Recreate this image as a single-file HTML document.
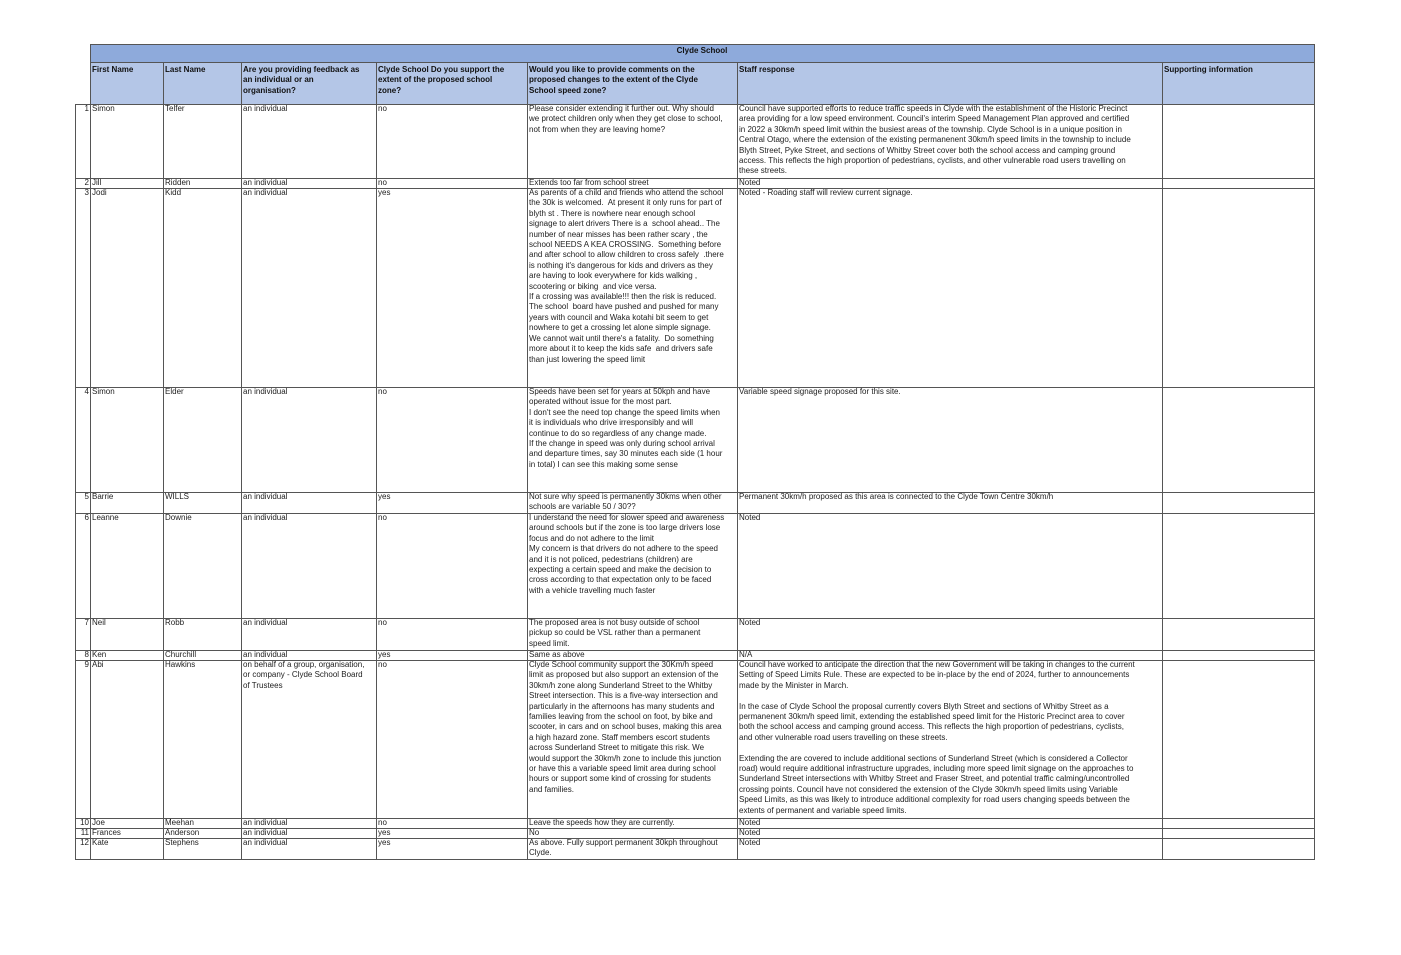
<!DOCTYPE html>
<html><head><meta charset="utf-8"><style>
body{margin:0;width:1401px;height:955px;background:#fff;position:relative;overflow:hidden;font-family:"Liberation Sans",Arial,sans-serif;font-size:8px;color:#222}
.h{position:absolute;height:1px;background:#555}
.v{position:absolute;width:1px;background:#555}
.t{position:absolute;line-height:10.4px;white-space:nowrap}
.b{font-weight:bold;color:#111}
.n{position:absolute;left:75px;width:14px;text-align:right;line-height:10.4px}
</style></head><body>
<div style="position:absolute;left:90px;top:44px;width:1224px;height:18px;background:#8eaadb"></div>
<div style="position:absolute;left:90px;top:62px;width:1224px;height:42px;background:#b4c6e7"></div>
<div class="t b" style="left:90px;width:1224px;text-align:center;top:46px">Clyde School</div>
<div class="h" style="left:90px;width:1225px;top:44px"></div>
<div class="h" style="left:90px;width:1225px;top:62px"></div>
<div class="h" style="left:75px;width:1240px;top:104px"></div>
<div class="h" style="left:75px;width:1240px;top:178px"></div>
<div class="h" style="left:75px;width:1240px;top:188px"></div>
<div class="h" style="left:75px;width:1240px;top:387px"></div>
<div class="h" style="left:75px;width:1240px;top:492px"></div>
<div class="h" style="left:75px;width:1240px;top:513px"></div>
<div class="h" style="left:75px;width:1240px;top:618px"></div>
<div class="h" style="left:75px;width:1240px;top:650px"></div>
<div class="h" style="left:75px;width:1240px;top:660px"></div>
<div class="h" style="left:75px;width:1240px;top:818px"></div>
<div class="h" style="left:75px;width:1240px;top:828px"></div>
<div class="h" style="left:75px;width:1240px;top:838px"></div>
<div class="h" style="left:75px;width:1240px;top:859px"></div>
<div class="v" style="left:75px;top:104px;height:756px"></div>
<div class="v" style="left:90px;top:44px;height:816px"></div>
<div class="v" style="left:163px;top:62px;height:798px"></div>
<div class="v" style="left:241px;top:62px;height:798px"></div>
<div class="v" style="left:376px;top:62px;height:798px"></div>
<div class="v" style="left:527px;top:62px;height:798px"></div>
<div class="v" style="left:737px;top:62px;height:798px"></div>
<div class="v" style="left:1162px;top:62px;height:798px"></div>
<div class="v" style="left:1314px;top:44px;height:816px"></div>

<div class="t b" style="left:92px;top:65px">First Name</div>
<div class="t b" style="left:165px;top:65px">Last Name</div>
<div class="t b" style="left:243px;top:65px">Are you providing feedback as<br>an individual or an<br>organisation?</div>
<div class="t b" style="left:378px;top:65px">Clyde School Do you support the<br>extent of the proposed school<br>zone?</div>
<div class="t b" style="left:529px;top:65px">Would you like to provide comments on the<br>proposed changes to the extent of the Clyde<br>School speed zone?</div>
<div class="t b" style="left:739px;top:65px">Staff response</div>
<div class="t b" style="left:1164px;top:65px">Supporting information</div>

<!-- row 1 -->
<div class="n" style="top:104px">1</div>
<div class="t" style="left:92px;top:104px">Simon</div>
<div class="t" style="left:165px;top:104px">Telfer</div>
<div class="t" style="left:243px;top:104px">an individual</div>
<div class="t" style="left:378px;top:104px">no</div>
<div class="t" style="left:529px;top:104px">Please consider extending it further out. Why should<br>we protect children only when they get close to school,<br>not from when they are leaving home?</div>
<div class="t" style="left:739px;top:104px">Council have supported efforts to reduce traffic speeds in Clyde with the establishment of the Historic Precinct<br>area providing for a low speed environment. Council's interim Speed Management Plan approved and certified<br>in 2022 a 30km/h speed limit within the busiest areas of the township. Clyde School is in a unique position in<br>Central Otago, where the extension of the existing permanenent 30km/h speed limits in the township to include<br>Blyth Street, Pyke Street, and sections of Whitby Street cover both the school access and camping ground<br>access. This reflects the high proportion of pedestrians, cyclists, and other vulnerable road users travelling on<br>these streets.</div>
<!-- row 2 -->
<div class="n" style="top:178px">2</div>
<div class="t" style="left:92px;top:178px">Jill</div>
<div class="t" style="left:165px;top:178px">Ridden</div>
<div class="t" style="left:243px;top:178px">an individual</div>
<div class="t" style="left:378px;top:178px">no</div>
<div class="t" style="left:529px;top:178px">Extends too far from school street</div>
<div class="t" style="left:739px;top:178px">Noted</div>
<!-- row 3 -->
<div class="n" style="top:188px">3</div>
<div class="t" style="left:92px;top:188px">Jodi</div>
<div class="t" style="left:165px;top:188px">Kidd</div>
<div class="t" style="left:243px;top:188px">an individual</div>
<div class="t" style="left:378px;top:188px">yes</div>
<div class="t" style="left:529px;top:188px">As parents of a child and friends who attend the school<br>the 30k is welcomed.&nbsp; At present it only runs for part of<br>blyth st . There is nowhere near enough school<br>signage to alert drivers There is a&nbsp; school ahead.. The<br>number of near misses has been rather scary , the<br>school NEEDS A KEA CROSSING.&nbsp; Something before<br>and after school to allow children to cross safely&nbsp; .there<br>is nothing it's dangerous for kids and drivers as they<br>are having to look everywhere for kids walking ,<br>scootering or biking&nbsp; and vice versa.<br>If a crossing was available!!! then the risk is reduced.<br>The school&nbsp; board have pushed and pushed for many<br>years with council and Waka kotahi bit seem to get<br>nowhere to get a crossing let alone simple signage.<br>We cannot wait until there's a fatality.&nbsp; Do something<br>more about it to keep the kids safe&nbsp; and drivers safe<br>than just lowering the speed limit</div>
<div class="t" style="left:739px;top:188px">Noted - Roading staff will review current signage.</div>
<!-- row 4 -->
<div class="n" style="top:387px">4</div>
<div class="t" style="left:92px;top:387px">Simon</div>
<div class="t" style="left:165px;top:387px">Elder</div>
<div class="t" style="left:243px;top:387px">an individual</div>
<div class="t" style="left:378px;top:387px">no</div>
<div class="t" style="left:529px;top:387px">Speeds have been set for years at 50kph and have<br>operated without issue for the most part.<br>I don't see the need top change the speed limits when<br>it is individuals who drive irresponsibly and will<br>continue to do so regardless of any change made.<br>If the change in speed was only during school arrival<br>and departure times, say 30 minutes each side (1 hour<br>in total) I can see this making some sense</div>
<div class="t" style="left:739px;top:387px">Variable speed signage proposed for this site.</div>
<!-- row 5 -->
<div class="n" style="top:492px">5</div>
<div class="t" style="left:92px;top:492px">Barrie</div>
<div class="t" style="left:165px;top:492px">WILLS</div>
<div class="t" style="left:243px;top:492px">an individual</div>
<div class="t" style="left:378px;top:492px">yes</div>
<div class="t" style="left:529px;top:492px">Not sure why speed is permanently 30kms when other<br>schools are variable 50 / 30??</div>
<div class="t" style="left:739px;top:492px">Permanent 30km/h proposed as this area is connected to the Clyde Town Centre 30km/h</div>
<!-- row 6 -->
<div class="n" style="top:513px">6</div>
<div class="t" style="left:92px;top:513px">Leanne</div>
<div class="t" style="left:165px;top:513px">Downie</div>
<div class="t" style="left:243px;top:513px">an individual</div>
<div class="t" style="left:378px;top:513px">no</div>
<div class="t" style="left:529px;top:513px">I understand the need for slower speed and awareness<br>around schools but if the zone is too large drivers lose<br>focus and do not adhere to the limit<br>My concern is that drivers do not adhere to the speed<br>and it is not policed, pedestrians (children) are<br>expecting a certain speed and make the decision to<br>cross according to that expectation only to be faced<br>with a vehicle travelling much faster</div>
<div class="t" style="left:739px;top:513px">Noted</div>
<!-- row 7 -->
<div class="n" style="top:618px">7</div>
<div class="t" style="left:92px;top:618px">Neil</div>
<div class="t" style="left:165px;top:618px">Robb</div>
<div class="t" style="left:243px;top:618px">an individual</div>
<div class="t" style="left:378px;top:618px">no</div>
<div class="t" style="left:529px;top:618px">The proposed area is not busy outside of school<br>pickup so could be VSL rather than a permanent<br>speed limit.</div>
<div class="t" style="left:739px;top:618px">Noted</div>
<!-- row 8 -->
<div class="n" style="top:650px">8</div>
<div class="t" style="left:92px;top:650px">Ken</div>
<div class="t" style="left:165px;top:650px">Churchill</div>
<div class="t" style="left:243px;top:650px">an individual</div>
<div class="t" style="left:378px;top:650px">yes</div>
<div class="t" style="left:529px;top:650px">Same as above</div>
<div class="t" style="left:739px;top:650px">N/A</div>
<!-- row 9 -->
<div class="n" style="top:660px">9</div>
<div class="t" style="left:92px;top:660px">Abi</div>
<div class="t" style="left:165px;top:660px">Hawkins</div>
<div class="t" style="left:243px;top:660px">on behalf of a group, organisation,<br>or company - Clyde School Board<br>of Trustees</div>
<div class="t" style="left:378px;top:660px">no</div>
<div class="t" style="left:529px;top:660px">Clyde School community support the 30Km/h speed<br>limit as proposed but also support an extension of the<br>30km/h zone along Sunderland Street to the Whitby<br>Street intersection. This is a five-way intersection and<br>particularly in the afternoons has many students and<br>families leaving from the school on foot, by bike and<br>scooter, in cars and on school buses, making this area<br>a high hazard zone. Staff members escort students<br>across Sunderland Street to mitigate this risk. We<br>would support the 30km/h zone to include this junction<br>or have this a variable speed limit area during school<br>hours or support some kind of crossing for students<br>and families.</div>
<div class="t" style="left:739px;top:660px">Council have worked to anticipate the direction that the new Government will be taking in changes to the current<br>Setting of Speed Limits Rule. These are expected to be in-place by the end of 2024, further to announcements<br>made by the Minister in March.<br><br>In the case of Clyde School the proposal currently covers Blyth Street and sections of Whitby Street as a<br>permanenent 30km/h speed limit, extending the established speed limit for the Historic Precinct area to cover<br>both the school access and camping ground access. This reflects the high proportion of pedestrians, cyclists,<br>and other vulnerable road users travelling on these streets.<br><br>Extending the are covered to include additional sections of Sunderland Street (which is considered a Collector<br>road) would require additional infrastructure upgrades, including more speed limit signage on the approaches to<br>Sunderland Street intersections with Whitby Street and Fraser Street, and potential traffic calming/uncontrolled<br>crossing points. Council have not considered the extension of the Clyde 30km/h speed limits using Variable<br>Speed Limits, as this was likely to introduce additional complexity for road users changing speeds between the<br>extents of permanent and variable speed limits.</div>
<!-- row 10 -->
<div class="n" style="top:818px">10</div>
<div class="t" style="left:92px;top:818px">Joe</div>
<div class="t" style="left:165px;top:818px">Meehan</div>
<div class="t" style="left:243px;top:818px">an individual</div>
<div class="t" style="left:378px;top:818px">no</div>
<div class="t" style="left:529px;top:818px">Leave the speeds how they are currently.</div>
<div class="t" style="left:739px;top:818px">Noted</div>
<!-- row 11 -->
<div class="n" style="top:828px">11</div>
<div class="t" style="left:92px;top:828px">Frances</div>
<div class="t" style="left:165px;top:828px">Anderson</div>
<div class="t" style="left:243px;top:828px">an individual</div>
<div class="t" style="left:378px;top:828px">yes</div>
<div class="t" style="left:529px;top:828px">No</div>
<div class="t" style="left:739px;top:828px">Noted</div>
<!-- row 12 -->
<div class="n" style="top:838px">12</div>
<div class="t" style="left:92px;top:838px">Kate</div>
<div class="t" style="left:165px;top:838px">Stephens</div>
<div class="t" style="left:243px;top:838px">an individual</div>
<div class="t" style="left:378px;top:838px">yes</div>
<div class="t" style="left:529px;top:838px">As above. Fully support permanent 30kph throughout<br>Clyde.</div>
<div class="t" style="left:739px;top:838px">Noted</div>
</body></html>
